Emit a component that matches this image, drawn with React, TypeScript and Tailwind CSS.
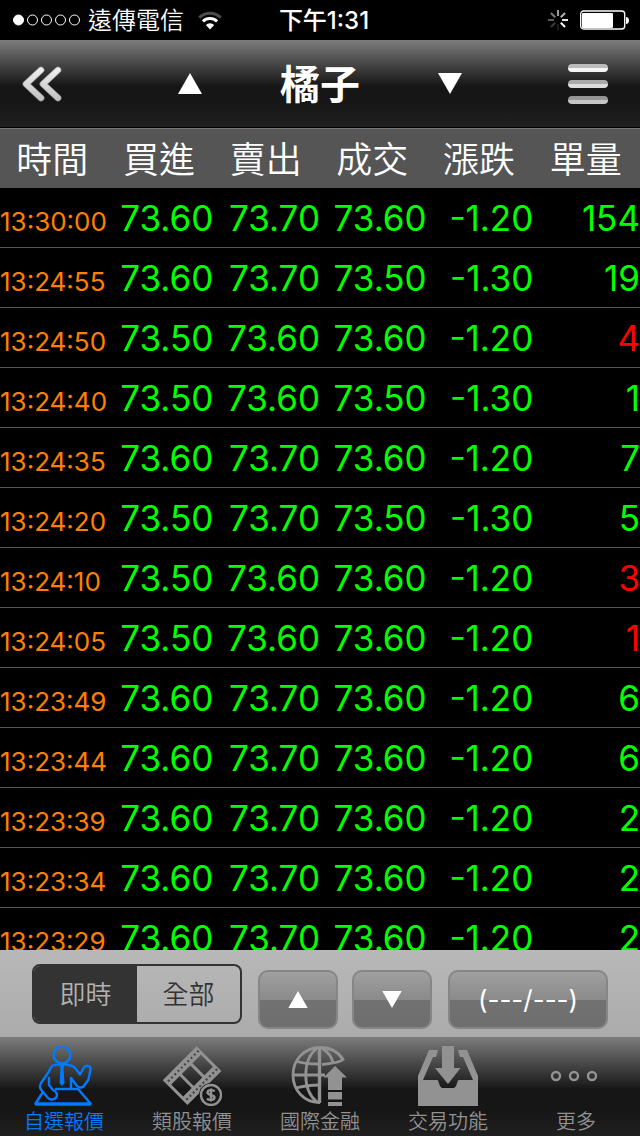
import { useState } from "react";
import clsx from "clsx";

type Tick = {
  time: string;
  bid: string;
  ask: string;
  price: string;
  change: string;
  volume: number;
  sell?: boolean;
};

const columns = ["時間", "買進", "賣出", "成交", "漲跌", "單量"];

const ticks: Tick[] = [
  { time: "13:30:00", bid: "73.60", ask: "73.70", price: "73.60", change: "-1.20", volume: 154 },
  { time: "13:24:55", bid: "73.60", ask: "73.70", price: "73.50", change: "-1.30", volume: 19 },
  { time: "13:24:50", bid: "73.50", ask: "73.60", price: "73.60", change: "-1.20", volume: 4, sell: true },
  { time: "13:24:40", bid: "73.50", ask: "73.60", price: "73.50", change: "-1.30", volume: 1 },
  { time: "13:24:35", bid: "73.60", ask: "73.70", price: "73.60", change: "-1.20", volume: 7 },
  { time: "13:24:20", bid: "73.50", ask: "73.70", price: "73.50", change: "-1.30", volume: 5 },
  { time: "13:24:10", bid: "73.50", ask: "73.60", price: "73.60", change: "-1.20", volume: 3, sell: true },
  { time: "13:24:05", bid: "73.50", ask: "73.60", price: "73.60", change: "-1.20", volume: 1, sell: true },
  { time: "13:23:49", bid: "73.60", ask: "73.70", price: "73.60", change: "-1.20", volume: 6 },
  { time: "13:23:44", bid: "73.60", ask: "73.70", price: "73.60", change: "-1.20", volume: 6 },
  { time: "13:23:39", bid: "73.60", ask: "73.70", price: "73.60", change: "-1.20", volume: 2 },
  { time: "13:23:34", bid: "73.60", ask: "73.70", price: "73.60", change: "-1.20", volume: 2 },
  { time: "13:23:29", bid: "73.60", ask: "73.70", price: "73.60", change: "-1.20", volume: 2 },
];

const Triangle = ({ down = false, className }: { down?: boolean; className?: string }) => (
  <svg viewBox="0 0 24 21" className={className} fill="currentColor" aria-hidden="true">
    <path d={down ? "M0 0h24L12 21z" : "M12 0l12 21H0z"} />
  </svg>
);

const spokes = ["#9a9a9a", "#b4b4b4", "#e8e8e8", "#ffffff", "#1c1c1c", "#3a3a3a", "#5c5c5c", "#7a7a7a"];

const StatusBar = () => (
  <div className="grid h-10 shrink-0 grid-cols-[1fr_auto_1fr] items-center bg-black text-2xl leading-9">
    <div className="flex items-center pl-3">
      <svg viewBox="0 0 70 12" className="h-3 w-[70px]" fill="none" stroke="#fff" aria-hidden="true">
        <circle cx="6.500" cy="6" r="5" fill="#fff" />
        <circle cx="20.500" cy="6" r="5" />
        <circle cx="34.500" cy="6" r="5" />
        <circle cx="48.500" cy="6" r="5" />
        <circle cx="62.500" cy="6" r="5" />
      </svg>
      <span className="ml-[6px] pt-[2px] font-[350]">遠傳電信</span>
      <svg viewBox="0 0 24 19" className="ml-[14px] h-[19px] w-6" fill="none" strokeWidth="3" aria-hidden="true">
        <path d="M1.2 6.6a15.6 15.6 0 0 1 21.6 0" stroke="#4c4c4c" />
        <path d="M4.9 10.4a10.4 10.4 0 0 1 14.2 0" stroke="#fff" />
        <path d="M12 18.4L7.8 14a6.2 6.2 0 0 1 8.4 0z" fill="#fff" />
      </svg>
    </div>
    <span className="pt-[2px] pl-2 font-medium">下午1:31</span>
    <div className="flex items-center justify-end gap-3 pr-[10px]">
      <svg viewBox="0 0 20 20" className="size-5" strokeWidth="2" aria-hidden="true">
        {spokes.map((color, i) => (
          <path key={i} d="M10 0v6" stroke={color} transform={`rotate(${i * 45} 10 10)`} />
        ))}
      </svg>
      <svg viewBox="0 0 50 20" className="h-5 w-[50px]" aria-hidden="true">
        <rect x=".7" y="1" width="44" height="18" rx="3" fill="none" stroke="#fff" strokeWidth="1.3" />
        <rect x="2" y="3" width="31" height="15" rx="1" fill="#fff" />
        <path d="M46 7c4 0 4 7 0 7z" fill="#fff" />
      </svg>
    </div>
  </div>
);

const TitleBar = () => (
  <header className="grid h-[88px] shrink-0 grid-cols-[1fr_auto_1fr] items-center border-b border-black bg-[linear-gradient(#7c7c7c,#555_20%,#161616_53%,#161616_70%,#202020)]">
    <button type="button" aria-label="返回" className="ml-[22px] justify-self-start">
      <svg viewBox="0 0 40 38" className="h-[38px] w-10" fill="none" strokeLinecap="round" strokeLinejoin="round">
        <defs>
          <linearGradient id="chevron" gradientUnits="userSpaceOnUse" x1="0" y1="0" x2="0" y2="38">
            <stop offset="0" stopColor="#f4f4f4" />
            <stop offset="1" stopColor="#bdbdbd" />
          </linearGradient>
        </defs>
        <path d="M19 5L4 19l15 14M36 5L21 19l15 14" stroke="#8f8f8f" strokeWidth="6.8" />
        <path d="M19 5L4 19l15 14M36 5L21 19l15 14" stroke="url(#chevron)" strokeWidth="5.4" />
      </svg>
    </button>
    <div className="flex items-center gap-[78px]">
      <button type="button" aria-label="上一檔">
        <Triangle className="h-[21px] w-6" />
      </button>
      <h1 className="pt-[2px] text-[40px] leading-[60px] font-bold">橘子</h1>
      <button type="button" aria-label="下一檔">
        <Triangle down className="h-[21px] w-6" />
      </button>
    </div>
    <button type="button" aria-label="選單" className="mr-8 grid gap-2 justify-self-end">
      <span className="h-2 w-10 rounded-full bg-linear-to-b from-[#bbb] from-50% to-[#f4f4f4] to-50%" />
      <span className="h-2 w-10 rounded-full bg-linear-to-b from-[#a8a8a8] from-50% to-[#dcdcdc] to-50%" />
      <span className="h-2 w-10 rounded-full bg-linear-to-b from-[#959595] from-50% to-[#c6c6c6] to-50%" />
    </button>
  </header>
);

const TickTable = () => (
  <main className="min-h-0 flex-1 overflow-hidden">
    <table className="w-full table-fixed border-separate border-spacing-0 text-[35px] leading-[57px]">
      <thead className="bg-[#555]">
        <tr>
          {columns.map((name) => (
            <th
              key={name}
              className="h-[60px] border-t border-[#777] p-0 pt-[3px] pr-[2px] text-center text-4xl leading-[56px] font-[350]"
            >
              {name}
            </th>
          ))}
        </tr>
      </thead>
      <tbody>
        {ticks.map((tick) => (
          <tr
            key={tick.time}
            className="text-right align-baseline text-[#00ff00] *:border-b *:border-[#555] *:p-0 *:pt-[2px]"
          >
            <td className="text-left text-[26px] leading-[40px] whitespace-nowrap text-[#ff8000]">{tick.time}</td>
            <td>{tick.bid}</td>
            <td>{tick.ask}</td>
            <td>{tick.price}</td>
            <td>{tick.change}</td>
            <td className={clsx(tick.sell && "text-[#ff0000]")}>{tick.volume}</td>
          </tr>
        ))}
      </tbody>
    </table>
  </main>
);

const glossy =
  "flex h-[59px] items-center justify-center rounded-[10px] border-2 border-[#868686] bg-[linear-gradient(#a0a0a0,#8a8a8a_50%,#727272_50%,#6e6e6e)] text-[26px]";

const Toolbar = () => {
  const [mode, setMode] = useState("即時");

  return (
    <div className="flex h-[87px] shrink-0 items-start gap-4 bg-linear-to-b from-[#b8b8b8] to-[#ababab] px-8 pt-[14px]">
      <div className="flex h-[60px] flex-1 overflow-hidden rounded-[8px] border-2 border-[#333]">
        {["即時", "全部"].map((label) => (
          <button
            key={label}
            type="button"
            aria-pressed={mode === label}
            onClick={() => setMode(label)}
            className={clsx(
              "flex-1 pt-[2px] text-[26px] leading-[54px] font-[350]",
              mode === label ? "bg-[#333] text-[#b2b2b2]" : "text-[#333]"
            )}
          >
            {label}
          </button>
        ))}
      </div>
      <div className="flex gap-[14px] pt-[6px]">
        <button type="button" aria-label="上一頁" className={clsx(glossy, "w-20")}>
          <Triangle className="h-[17px] w-5" />
        </button>
        <button type="button" aria-label="下一頁" className={clsx(glossy, "w-20")}>
          <Triangle down className="h-[17px] w-5" />
        </button>
      </div>
      <div className="pt-[6px]">
        <button type="button" className={clsx(glossy, "w-40")}>
          (---/---)
        </button>
      </div>
    </div>
  );
};

const BrokerIcon = () => (
  <g fill="none" stroke="currentColor" strokeWidth="2.4" strokeLinejoin="round" strokeLinecap="round">
    <circle cx="28" cy="9" r="8.400" />
    <path d="M36 19.500c-2-1.500-14-1.500-17 0-2 1-3 3-4 6L7 37c-2 4-1 6 2 9l5 6c3 3 9 1 9-3 0-3-2-4-4-5l-4-5v-7" />
    <path d="M26.500 19h3l-.5 4 1 14-2 2.500-2-2.500 1-14z" fill="currentColor" strokeWidth="1" />
    <path d="M36 19.500c3 0 5 2 7 5l3 4 4-7c2-3 7-2 6.500 2l-2 10-5 7c-3 2-5 1-7-1l-5-7M37 32v10" />
    <path d="M9 46L1.500 57.500h55L44 43H22" />
    <path d="M2 58.500h54" />
  </g>
);

const FilmIcon = () => (
  <>
    <g transform="translate(0 35) rotate(-45)">
      <path
        fill="currentColor"
        fillRule="evenodd"
        d="M1 0H49V35H1zM4 9V26H16V9zM19 9V26H31V9zM34 9V26H46V9z"
      />
      <path d="M4 4.500H48M4 30.500H48" stroke="#444" strokeWidth="2.200" strokeDasharray="2 2.600" />
    </g>
    <circle cx="49" cy="49" r="12" fill="#171717" />
    <circle cx="49" cy="49" r="10" fill="none" stroke="currentColor" strokeWidth="2.400" />
    <path
      d="M52.500 45.500c-1-2-7-2-7 1s7 2 7 5-6 3-7.500 1M49 42.500v13"
      fill="none"
      stroke="currentColor"
      strokeWidth="2.400"
    />
  </>
);

const GlobeIcon = () => (
  <>
    <g fill="none" stroke="currentColor" strokeWidth="2.800">
      <path d="M30 56.500C14 57 3 44 3 29 3 14 14 1.500 30 1.500c10 0 18 4 23 12-5 4-13 3.500-21 5" />
      <path d="M29.500 1v56" strokeWidth="3.400" />
      <path d="M27 2C12 14 12 44 27 56M32 2c6 4 10 9 11 15" />
      <path d="M6 15c7 3 15 3 24 3M3 29h32M6 42c7-2 15-3 24-3" />
    </g>
    <path fill="currentColor" d="M45 20l12 11.500h-5V44H38V31.500h-4.500zM38 46h14v7.500H38zM38 56h14v4H38z" />
  </>
);

const TradeIcon = () => (
  <path
    fill="currentColor"
    d="M24 0h12v22h6.500L30 38 17 22h7zM0 60V30L11 4h9l-2 7h-3L5 34h14c2 0 2 7 5 8h12c3-1 3-8 5-8h14L45 11h-3l-2-7h9l11 26v30z"
  />
);

const MoreIcon = () => (
  <g fill="none" stroke="currentColor" strokeWidth="2.400">
    <circle cx="10" cy="30" r="4" />
    <circle cx="28" cy="30" r="4" />
    <circle cx="46" cy="30" r="4" />
  </g>
);

const tabs = [
  { label: "自選報價", Icon: BrokerIcon },
  { label: "類股報價", Icon: FilmIcon },
  { label: "國際金融", Icon: GlobeIcon },
  { label: "交易功能", Icon: TradeIcon },
  { label: "更多", Icon: MoreIcon },
];

const TabBar = () => (
  <nav className="grid h-[99px] shrink-0 grid-cols-5 bg-[linear-gradient(#7c7c7c,#555_20%,#161616_53%,#161616_75%,#202020)]">
    {tabs.map(({ label, Icon }, i) => (
      <a
        key={label}
        href="#"
        className={clsx("flex flex-col items-center pt-[9px]", i === 0 ? "text-[#007aff]" : "text-[#929292]")}
      >
        <svg viewBox="0 0 60 60" className="size-[60px] shrink-0" aria-hidden="true">
          <Icon />
        </svg>
        <span className="pt-[2px] text-xl leading-7 font-[350]">{label}</span>
      </a>
    ))}
  </nav>
);

const App = () => (
  <div
    lang="zh-TW"
    className="flex h-screen flex-col overflow-hidden bg-black font-['Inter','Noto_Sans_CJK_TC',sans-serif] text-white"
  >
    <StatusBar />
    <TitleBar />
    <TickTable />
    <Toolbar />
    <TabBar />
  </div>
);

export default App;
